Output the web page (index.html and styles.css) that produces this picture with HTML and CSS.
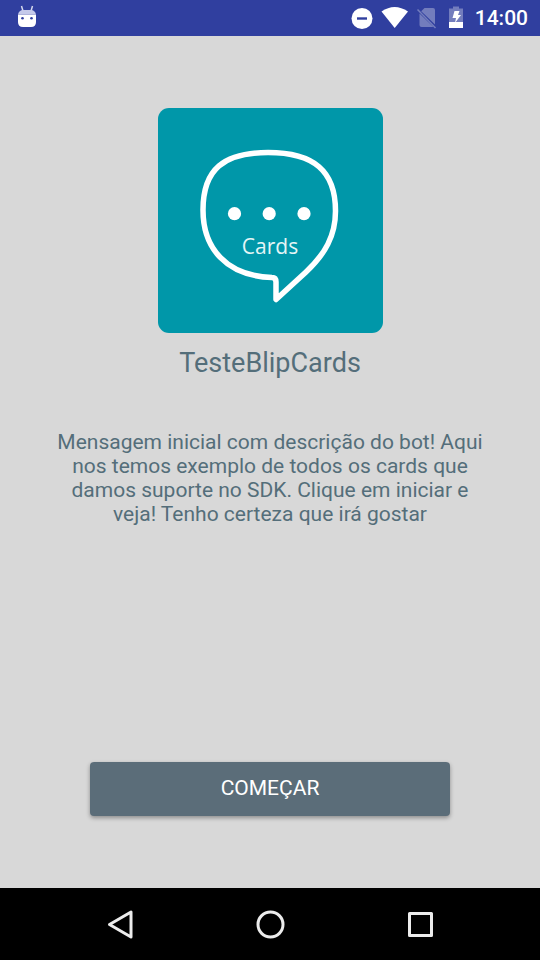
FILE: index.html
```html
<!DOCTYPE html>
<html lang="pt-BR">
<head>
<meta charset="utf-8">
<meta name="viewport" content="width=device-width, initial-scale=1">
<title>TesteBlipCards</title>
<link rel="stylesheet" href="styles.css">
</head>
<body>
<header class="status-bar">
  <svg class="status-icon" width="20" height="24" viewBox="0 0 20 24" aria-hidden="true">
    <path d="M4.500 1 6 6M15.500 1 14 6" stroke="#fff" stroke-opacity=".8" stroke-width="1.500"/>
    <path d="M1 9.500h18V17q0 5-5 5H6q-5 0-5-5z" fill="#fff"/>
    <path d="M1 9.500Q2 5 6 5h8q4 0 5 4.500z" fill="#c5caea"/>
    <circle cx="5.500" cy="13.200" r="1.300" fill="#303f9f"/>
    <circle cx="14.500" cy="13.200" r="1.300" fill="#303f9f"/>
  </svg>
  <div class="status-group">
    <svg width="22" height="24" viewBox="0 0 22 24" aria-hidden="true">
      <circle cx="11" cy="12.500" r="10.500" fill="#fff"/>
      <path d="M6 12.500h10" stroke="#303f9f" stroke-width="2.400"/>
    </svg>
    <svg class="wifi" width="28" height="24" viewBox="0 0 28 24" aria-hidden="true">
      <path d="M.500 5.500Q13.500-3.500 27 5.500L13.700 22z" fill="#fff"/>
    </svg>
    <svg class="sim" width="22" height="24" viewBox="0 0 22 24" aria-hidden="true">
      <path d="M8.500 2H17q2 0 2 2v14.500L5.200 5.300zM3.500 7.500 17.500 21H5.500q-2 0-2-2z" fill="#737dbd"/>
      <path d="m1.500 3.500 18 18.500" stroke="#737dbd" stroke-width="1.500"/>
    </svg>
    <svg class="battery" width="16" height="24" viewBox="0 0 16 24" aria-hidden="true">
      <path d="M5 .500h6v2h4V17H1V2.500h4z" fill="#737dbd"/>
      <path d="M1 16h14v6H1z" fill="#fff"/>
      <path d="M6.500 5h5L10 9h3l-6 8 1-5H4.500z" fill="#fff"/>
    </svg>
    <time class="clock">14:00</time>
  </div>
</header>
<main class="welcome">
  <svg class="logo" viewBox="0 0 225 225" role="img" aria-label="Cards">
    <rect width="225" height="225" rx="11" fill="#0097a9"/>
    <path d="M114 169.500C68 168 45 140 45 102C45 61 66 44.500 110 44.500C156 44.500 177.500 63 177.500 103C177.500 128 167 146 148 164L118 191.500V174Q118 169.500 114 169.500Z" fill="none" stroke="#fff" stroke-width="5.500" stroke-linejoin="round"/>
    <circle cx="76.500" cy="105.700" r="6.600" fill="#fff"/>
    <circle cx="111.200" cy="105.700" r="6.600" fill="#fff"/>
    <circle cx="146" cy="105.700" r="6.600" fill="#fff"/>
    <text class="logo-text" x="112" y="146" text-anchor="middle">Cards</text>
  </svg>
  <h1 class="title">TesteBlipCards</h1>
  <p class="message">Mensagem inicial com descrição do bot! Aqui nos temos exemplo de todos os cards que damos suporte no SDK. Clique em iniciar e veja! Tenho certeza que irá gostar</p>
  <button class="start" type="button">COMEÇAR</button>
</main>
<nav class="nav-bar" aria-label="Sistema">
  <button class="nav-button" type="button" aria-label="Voltar">
    <svg width="30" height="30" viewBox="0 0 30 30"><path d="M26 3v25L4.500 15.500z"/></svg>
  </button>
  <button class="nav-button" type="button" aria-label="Início">
    <svg width="30" height="30" viewBox="0 0 30 30"><circle cx="15.500" cy="15.500" r="12.500"/></svg>
  </button>
  <button class="nav-button" type="button" aria-label="Recentes">
    <svg width="30" height="30" viewBox="0 0 30 30"><path d="M4.500 4.500h22v22h-22z"/></svg>
  </button>
</nav>
</body>
</html>
```
FILE: styles.css
```css
* {
  box-sizing: border-box;
}

body {
  display: flex;
  flex-direction: column;
  min-height: 100vh;
  margin: 0;
  background: #d8d8d8;
  color: #546e7a;
  font-family: Roboto, "Liberation Sans", sans-serif;
}

svg {
  display: block;
}

.status-bar {
  display: flex;
  justify-content: space-between;
  align-items: center;
  height: 36px;
  padding: 0 12px 0 17px;
  background: #303f9f;
  color: #fff;
}

.status-icon {
  margin-bottom: 2px;
}

.status-group {
  display: flex;
  align-items: center;
}

.wifi {
  margin-left: 8px;
}

.sim {
  margin-left: 7px;
}

.battery {
  margin-left: 10px;
}

.clock {
  margin-left: 11px;
  font-size: 21px;
  font-weight: 500;
  line-height: 26px;
}

.welcome {
  display: flex;
  flex: 1;
  flex-direction: column;
  align-items: center;
  padding: 72px 48px;
}

.logo {
  width: 225px;
  height: 225px;
}

.logo-text {
  fill: #e4f5f6;
  font-family: "Open Sans", "Noto Sans", sans-serif;
  font-size: 21px;
}

.title {
  margin: 12px 0 0;
  font-size: 27px;
  font-weight: 400;
  line-height: 36px;
}

.message {
  margin: 49px 0 48px;
  font-size: 21px;
  line-height: 24px;
  text-align: center;
}

.start {
  width: calc(100% - 84px);
  height: 54px;
  margin-top: auto;
  padding: 0 0 2px;
  border: 0;
  border-radius: 4px;
  background: #5b6d79;
  box-shadow: 0 2px 4px rgba(0, 0, 0, 0.35);
  color: #fff;
  font: inherit;
  font-size: 21px;
}

.nav-bar {
  display: flex;
  justify-content: center;
  gap: 60px;
  height: 72px;
  background: #000;
}

.nav-button {
  display: flex;
  align-items: center;
  justify-content: center;
  width: 90px;
  padding: 0;
  border: 0;
  background: none;
}

.nav-button svg {
  fill: none;
  stroke: #ececec;
  stroke-width: 3;
  stroke-linejoin: round;
}
```
